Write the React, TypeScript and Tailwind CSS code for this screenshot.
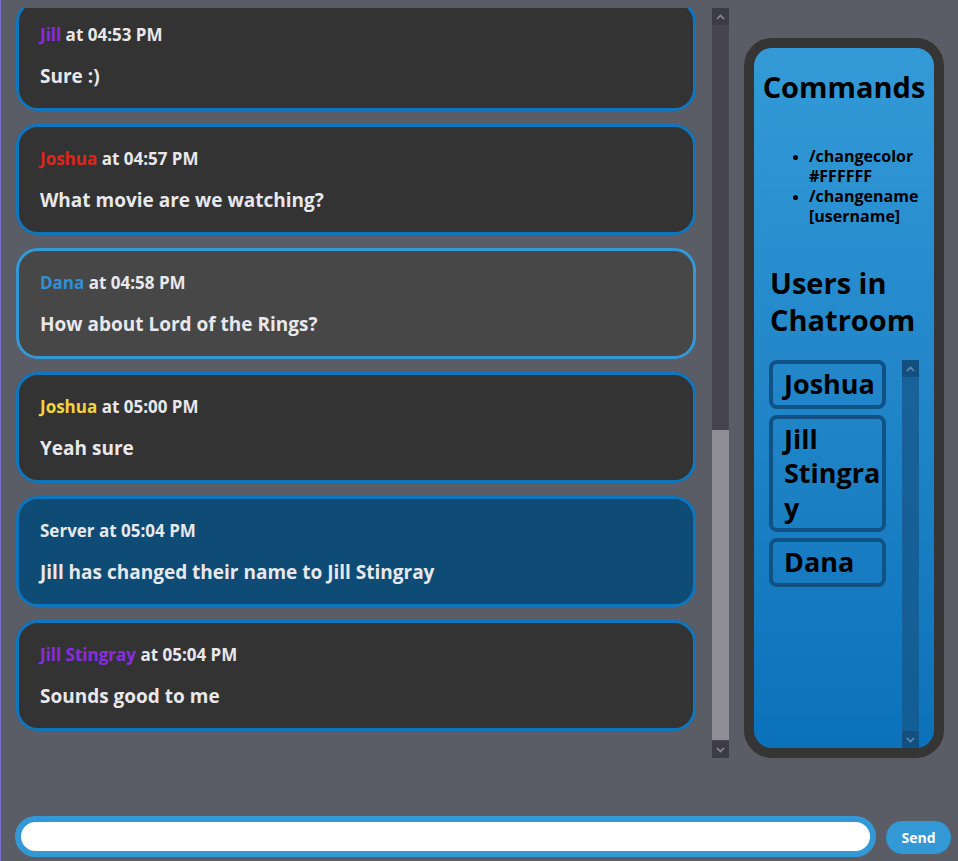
import React from "react";

type Msg = { name: string; color: string; time: string; text: string; kind?: "hover" | "server" };

const messages: Msg[] = [
    { name: "Jill", color: "text-[#8a2be2]", time: "04:53 PM", text: "Sure :)" },
    { name: "Joshua", color: "text-[#e2231a]", time: "04:57 PM", text: "What movie are we watching?" },
    { name: "Dana", color: "text-[#2f8fd8]", time: "04:58 PM", text: "How about Lord of the Rings?", kind: "hover" },
    { name: "Joshua", color: "text-[#f5d33c]", time: "05:00 PM", text: "Yeah sure" },
    { name: "Server", color: "text-[#e8e8ec]", time: "05:04 PM", text: "Jill has changed their name to Jill Stingray", kind: "server" },
    { name: "Jill Stingray", color: "text-[#8a2be2]", time: "05:04 PM", text: "Sounds good to me" },
];

const users = ["Joshua", "Jill Stingray", "Dana"];

function Chevron({ up, className }: { up?: boolean; className?: string }) {
    return (
        <svg width="9" height="6" viewBox="0 0 9 6" className={className}>
            <polyline
                points={up ? "1,5 4.5,1.5 8,5" : "1,1 4.5,4.5 8,1"}
                fill="none"
                stroke="currentColor"
                strokeWidth="1.6"
            />
        </svg>
    );
}

function MessageCard({ msg }: { msg: Msg }) {
    let look = "bg-[#333333] border-[#0f75bd]";
    if (msg.kind === "hover") look = "bg-[#474747] border-[#3399d6]";
    if (msg.kind === "server") look = "bg-[#0e4c75] border-[#0f75bd]";
    return (
        <div className={"shrink-0 rounded-[22px] border-[3px] px-[21px] pt-[19px] pb-[18px] " + look}>
            <p className="text-[17px] leading-[25px] font-bold text-[#e8e8ec]">
                <span className={msg.color}>{msg.name}</span> at {msg.time}
            </p>
            <p className="mt-[15px] text-[19px] leading-[28px] font-bold text-[#e8e8ec]">{msg.text}</p>
        </div>
    );
}

export default function App() {
    return (
        <div
            className="w-[958px] h-[861px] bg-[#5a5c66] border-l border-[#7b6fd6] flex flex-col overflow-hidden"
            style={{ fontFamily: '"Open Sans", "Noto Sans", sans-serif' }}
        >
            <div className="flex pt-[8px] pl-[15px]">
                {/* messages */}
                <div className="w-[680px] h-[750px] overflow-hidden">
                    <div className="flex flex-col gap-[13px] -mt-[8px]">
                        {messages.map((m, i) => (
                            <MessageCard key={i} msg={m} />
                        ))}
                    </div>
                </div>

                {/* fake scrollbar */}
                <div className="ml-[16px] w-[17px] h-[750px] bg-[#45454f] flex flex-col">
                    <div className="h-[17px] bg-[#3b3c46] flex items-center justify-center text-[#8a8a90]">
                        <Chevron up />
                    </div>
                    <div className="flex-1 flex flex-col justify-end pb-[1px]">
                        <div className="h-[310px] bg-[#8e8f94]" />
                    </div>
                    <div className="h-[17px] bg-[#3b3c46] flex items-center justify-center text-[#8a8a90]">
                        <Chevron />
                    </div>
                </div>

                {/* sidebar */}
                <div className="ml-[15px] mt-[30px] w-[200px] h-[720px] rounded-[28px] border-[10px] border-[#353535] bg-[#353535]">
                    <div className="h-full rounded-[18px] bg-gradient-to-b from-[#339ad7] to-[#0b71ba] flex flex-col text-black">
                        <h2 className="mt-[20px] text-center text-[29px] leading-[37px] font-bold">Commands</h2>
                        <ul className="mt-[41px] ml-[55px] list-disc text-[16px] leading-[20px] font-bold marker:text-[13px]">
                            <li>/changecolor #FFFFFF</li>
                            <li>/changename [username]</li>
                        </ul>
                        <h2 className="mt-[38px] pl-[16px] text-[29px] leading-[37px] font-bold">
                            Users in Chatroom
                        </h2>
                        <div className="mt-[22px] pl-[15px] flex flex-1 min-h-0">
                            <div className="w-[117px] flex flex-col gap-[6px]">
                                {users.map((u) => (
                                    <div
                                        key={u}
                                        className="rounded-[8px] border-[4px] border-[#0f5283] pl-[11px] py-[3px] text-[27px] leading-[34.5px] font-bold break-words"
                                    >
                                        {u}
                                    </div>
                                ))}
                            </div>
                            <div className="ml-[16px] w-[17px] bg-[#15598c]/80 flex flex-col">
                                <div className="h-[17px] bg-[#13507f] flex items-center justify-center text-[#5b8fb8]">
                                    <Chevron up />
                                </div>
                                <div className="flex-1" />
                                <div className="h-[17px] bg-[#13507f] flex items-center justify-center text-[#5b8fb8]">
                                    <Chevron />
                                </div>
                            </div>
                        </div>
                    </div>
                </div>
            </div>

            {/* input row */}
            <div className="mt-[58px] pl-[14px] flex items-center">
                <div className="w-[861px] h-[41px] rounded-full border-[6px] border-[#3399d6] bg-white" />
                <button className="ml-[10px] mt-[1px] w-[65px] h-[33px] rounded-full bg-[#3399d6] text-white text-[14px] font-bold">
                    Send
                </button>
            </div>
        </div>
    );
}
